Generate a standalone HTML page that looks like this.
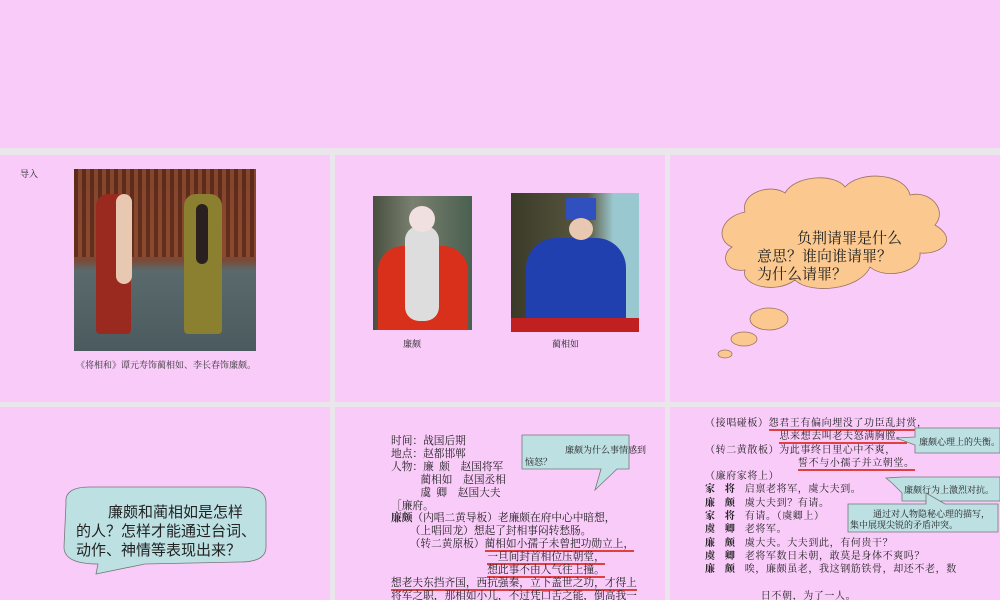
<!DOCTYPE html>
<html><head><meta charset="utf-8"><style>
*{margin:0;padding:0;box-sizing:border-box}
html{width:1000px;height:600px;overflow:hidden}
body{width:1000px;height:600px;background:#ebe6eb;position:relative;overflow:hidden;font-family:"Liberation Serif","Noto Serif CJK SC",serif;color:#222}
.s{position:absolute;background:#f9cbf9;overflow:hidden}
.a{position:absolute;white-space:nowrap}
.t{font-size:10.7px;line-height:12.9px;letter-spacing:0}
.r{font-size:10px;line-height:13.3px;letter-spacing:0.6px}
u{text-decoration:none;border-bottom:2px solid #e04040}
b{font-weight:bold}
</style></head><body>
<div class="s" style="left:0;top:0;width:1000px;height:148px"></div>
<div class="s" style="left:0;top:155px;width:330px;height:247px"></div>
<div class="s" style="left:335px;top:155px;width:330px;height:247px"></div>
<div class="s" style="left:670px;top:155px;width:330px;height:247px"></div>
<div class="s" style="left:0;top:407px;width:330px;height:193px"></div>

<!-- slide 1 -->
<div class="a" style="left:20px;top:167px;font-size:9px">导入</div>
<div class="a" style="left:74px;top:169px;width:182px;height:182px;background:linear-gradient(#6a3320 0%,#8a4a30 45%,#7a4a35 50%,#5a6a6c 56%,#4a5a5e 100%)">
 <div style="position:absolute;left:0;top:0;width:182px;height:88px;background:repeating-linear-gradient(90deg,#5a2818 0 4px,#8a4a30 4px 8px);opacity:.8"></div>
 <div style="position:absolute;left:22px;top:25px;width:35px;height:140px;background:#9a2a20;border-radius:12px 12px 4px 4px"></div>
 <div style="position:absolute;left:42px;top:25px;width:16px;height:90px;background:#e8c8b0;border-radius:8px"></div>
 <div style="position:absolute;left:110px;top:25px;width:38px;height:140px;background:#8a8030;border-radius:12px 12px 4px 4px"></div>
 <div style="position:absolute;left:122px;top:35px;width:12px;height:60px;background:#2a2020;border-radius:6px"></div>
</div>
<div class="a" style="left:76px;top:358px;font-size:9px;color:#333">《将相和》谭元寿饰蔺相如、李长春饰廉颇。</div>

<!-- slide 2 -->
<div class="a" style="left:373px;top:196px;width:99px;height:134px;background:linear-gradient(90deg,#4a5040,#7a8070 40%,#4a6050)">
 <div style="position:absolute;left:5px;top:50px;width:90px;height:84px;background:#d8301a;border-radius:25px 25px 0 0"></div>
 <div style="position:absolute;left:32px;top:30px;width:34px;height:95px;background:#ddd;border-radius:14px"></div>
 <div style="position:absolute;left:36px;top:10px;width:26px;height:26px;background:#f0e0e0;border-radius:50%"></div>
</div>
<div class="a" style="left:403px;top:337px;font-size:9px">廉颇</div>
<div class="a" style="left:511px;top:193px;width:128px;height:139px;background:linear-gradient(90deg,#3a3a28,#5a5840 60%,#9ac8d0 80%)">
 <div style="position:absolute;left:15px;top:45px;width:100px;height:94px;background:#2040b0;border-radius:30px 30px 0 0"></div>
 <div style="position:absolute;left:55px;top:5px;width:30px;height:22px;background:#3050c0"></div>
 <div style="position:absolute;left:58px;top:25px;width:24px;height:22px;background:#e8c8b0;border-radius:50%"></div>
 <div style="position:absolute;left:0;top:125px;width:128px;height:14px;background:#c02020"></div>
</div>
<div class="a" style="left:552px;top:337px;font-size:9px">蔺相如</div>

<!-- slide 3 cloud -->
<svg class="a" style="left:670px;top:155px" width="330" height="247">
<g fill="#fbc98f" stroke="#9a7060" stroke-width="0.8">
<path d="M75,57 C70,38 100,28 115,38 C125,20 165,18 175,32 C190,15 235,18 240,40 C260,35 278,55 265,70 C290,85 270,100 250,98 C252,118 215,125 200,112 C190,135 140,140 125,125 C105,140 70,130 75,115 C55,118 50,100 62,92 C45,85 50,62 75,57 Z"/>
<ellipse cx="99" cy="164" rx="19" ry="11"/>
<ellipse cx="74" cy="184" rx="13" ry="7"/>
<ellipse cx="55" cy="199" rx="7" ry="4"/>
</g>
<g font-size="15" fill="#222" font-family="Liberation Serif,Noto Serif CJK SC,serif">
<text x="127" y="88">负荆请罪是什么</text>
<text x="87" y="106">意思？谁向谁请罪？</text>
<text x="87" y="124">为什么请罪？</text>
</g>
</svg>

<!-- slide 4 -->
<svg class="a" style="left:0;top:407px" width="330" height="193">
<path d="M66,96 Q64,80 90,80 L240,80 Q266,80 266,96 L266,140 Q266,155 240,155 L145,157 L96,167 L98,157 Q64,157 64,140 Z" fill="#bde0e3" stroke="#777" stroke-width="0.8"/>
<g font-size="15" fill="#222" font-family="Liberation Sans,Noto Sans CJK SC,sans-serif">
<text x="108" y="110">廉颇和蔺相如是怎样</text>
<text x="76" y="129">的人？怎样才能通过台词、</text>
<text x="76" y="148">动作、神情等表现出来？</text>
</g>
</svg>

<!-- slide 5 -->
<div class="s" style="left:335px;top:407px;width:330px;height:193px">
<svg class="a" style="left:0;top:0" width="330" height="193">
<path d="M187,28 L294,28 L294,62 L282,62 L260,83 L266,62 L187,62 Z" fill="#bde0e3" stroke="#777" stroke-width="0.8"/>
<text x="230" y="46" font-size="9" fill="#222">廉颇为什么事情感到</text>
<text x="190" y="58" font-size="9" fill="#222">恼怒？</text>
</svg>
<div class="a t" style="left:56px;top:28px">时间：战国后期<br>地点：赵都邯郸<br>人物：廉&nbsp;&nbsp;颇&nbsp;&nbsp;&nbsp;&nbsp;赵国将军<br>&nbsp;&nbsp;&nbsp;&nbsp;&nbsp;&nbsp;&nbsp;&nbsp;&nbsp;&nbsp;&nbsp;蔺相如&nbsp;&nbsp;&nbsp;&nbsp;赵国丞相<br>&nbsp;&nbsp;&nbsp;&nbsp;&nbsp;&nbsp;&nbsp;&nbsp;&nbsp;&nbsp;&nbsp;虞&nbsp;&nbsp;卿&nbsp;&nbsp;&nbsp;&nbsp;赵国大夫<br>［廉府。<br><b>廉颇</b>（内唱二黄导板）老廉颇在府中心中暗想，<br>&nbsp;&nbsp;&nbsp;&nbsp;&nbsp;&nbsp;&nbsp;（上唱回龙）想起了封相事闷转愁肠。<br>&nbsp;&nbsp;&nbsp;&nbsp;&nbsp;&nbsp;&nbsp;（转二黄原板）<u>蔺相如小孺子未曾把功勋立上，</u><br>&nbsp;&nbsp;&nbsp;&nbsp;&nbsp;&nbsp;&nbsp;&nbsp;&nbsp;&nbsp;&nbsp;&nbsp;&nbsp;&nbsp;&nbsp;&nbsp;&nbsp;&nbsp;&nbsp;&nbsp;&nbsp;&nbsp;&nbsp;&nbsp;&nbsp;&nbsp;&nbsp;&nbsp;&nbsp;&nbsp;&nbsp;&nbsp;&nbsp;&nbsp;&nbsp;&nbsp;<u>一旦间封首相位压朝堂，</u><br>&nbsp;&nbsp;&nbsp;&nbsp;&nbsp;&nbsp;&nbsp;&nbsp;&nbsp;&nbsp;&nbsp;&nbsp;&nbsp;&nbsp;&nbsp;&nbsp;&nbsp;&nbsp;&nbsp;&nbsp;&nbsp;&nbsp;&nbsp;&nbsp;&nbsp;&nbsp;&nbsp;&nbsp;&nbsp;&nbsp;&nbsp;&nbsp;&nbsp;&nbsp;&nbsp;&nbsp;<u>想此事不由人气往上撞。</u><br><u>想老夫东挡齐国，西抗强秦，立下盖世之功，才得上</u><br>将军之职，那相如小儿，不过凭口舌之能，倒高我一</div>
</div>

<!-- slide 6 -->
<div class="s" style="left:670px;top:407px;width:330px;height:193px">
<div class="a r" style="left:35px;top:10px">（接唱碰板）<u>怨君王有偏向埋没了功臣乱封赏，</u><br>&nbsp;&nbsp;&nbsp;&nbsp;&nbsp;&nbsp;&nbsp;&nbsp;&nbsp;&nbsp;&nbsp;&nbsp;&nbsp;&nbsp;&nbsp;&nbsp;&nbsp;&nbsp;&nbsp;&nbsp;&nbsp;&nbsp;&nbsp;&nbsp;<u>思来想去叫老夫怒满胸膛。</u><br>（转二黄散板）为此事终日里心中不爽，<br>&nbsp;&nbsp;&nbsp;&nbsp;&nbsp;&nbsp;&nbsp;&nbsp;&nbsp;&nbsp;&nbsp;&nbsp;&nbsp;&nbsp;&nbsp;&nbsp;&nbsp;&nbsp;&nbsp;&nbsp;&nbsp;&nbsp;&nbsp;&nbsp;&nbsp;&nbsp;&nbsp;&nbsp;&nbsp;&nbsp;<u>誓不与小孺子并立朝堂。</u><br>（廉府家将上）<br><b>家&nbsp;&nbsp;&nbsp;将</b>&nbsp;&nbsp;&nbsp;启禀老将军，虞大夫到。<br><b>廉&nbsp;&nbsp;&nbsp;颇</b>&nbsp;&nbsp;&nbsp;虞大夫到？有请。<br><b>家&nbsp;&nbsp;&nbsp;将</b>&nbsp;&nbsp;&nbsp;有请。（虞卿上）<br><b>虞&nbsp;&nbsp;&nbsp;卿</b>&nbsp;&nbsp;&nbsp;老将军。<br><b>廉&nbsp;&nbsp;&nbsp;颇</b>&nbsp;&nbsp;&nbsp;虞大夫。大夫到此，有何贵干？<br><b>虞&nbsp;&nbsp;&nbsp;卿</b>&nbsp;&nbsp;&nbsp;老将军数日未朝，敢莫是身体不爽吗？<br><b>廉&nbsp;&nbsp;&nbsp;颇</b>&nbsp;&nbsp;&nbsp;唉，廉颇虽老，我这钢筋铁骨，却还不老，数<br><br>&nbsp;&nbsp;&nbsp;&nbsp;&nbsp;&nbsp;&nbsp;&nbsp;&nbsp;&nbsp;&nbsp;&nbsp;&nbsp;&nbsp;&nbsp;&nbsp;&nbsp;&nbsp;日不朝，为了一人。</div>
<svg class="a" style="left:0;top:0" width="330" height="193">
<g fill="#bde0e3" stroke="#777" stroke-width="0.8">
<path d="M245,21 L330,21 L330,46 L245,46 L245,38 L226,31 L245,30 Z"/>
<path d="M232,70 L330,70 L330,94 L232,94 L232,86 L222,76 L216,71 Z"/>
<path d="M178,97 L256,97 L256,86 L275,97 L328,97 L328,125 L178,125 Z"/>
</g>
<text x="249" y="38" font-size="9" fill="#222">廉颇心理上的失衡。</text>
<text x="234" y="86" font-size="9" fill="#222">廉颇行为上激烈对抗。</text>
<text x="203" y="110" font-size="9" fill="#222">通过对人物隐秘心理的描写，</text>
<text x="180" y="121" font-size="9" fill="#222">集中展现尖锐的矛盾冲突。</text>
</svg>
</div>
</body></html>
